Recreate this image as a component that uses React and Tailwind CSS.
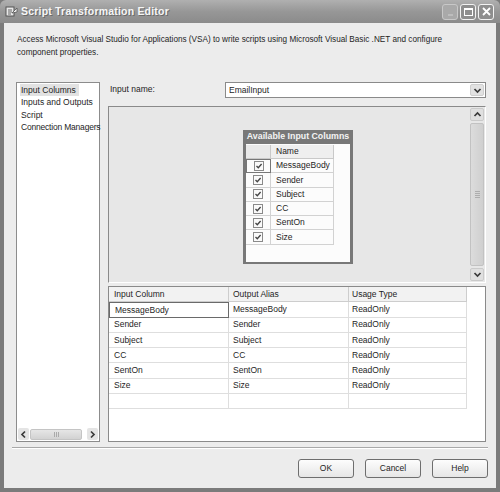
import React from 'react';

const Chevron = ({ dir = "down", color = "#3a3a3a" }) => {
  const d = {
    down: "M1.5 3 L4.5 6 L7.5 3",
    up: "M1.5 6 L4.5 3 L7.5 6",
    left: "M6 1.5 L3 4.5 L6 7.5",
    right: "M3 1.5 L6 4.5 L3 7.5",
  }[dir];
  return (
    <svg width="9" height="9" viewBox="0 0 9 9">
      <path d={d} fill="none" stroke={color} strokeWidth="1.7" />
    </svg>
  );
};

const Check = () => (
  <div className="w-[10px] h-[10px] border border-[#8a8a8a] bg-[#fafafa] flex items-center justify-center">
    <svg width="8" height="8" viewBox="0 0 8 8">
      <path d="M1.5 4 L3.3 5.8 L6.6 2" fill="none" stroke="#444" strokeWidth="1.3" />
    </svg>
  </div>
);

const available = ["MessageBody", "Sender", "Subject", "CC", "SentOn", "Size"];

export default function App() {
  return (
    <div className="w-[500px] h-[492px] flex flex-col bg-[#7b7b7b] font-['Liberation_Sans',Arial,sans-serif] text-[#1e1e1e] overflow-hidden">
      {/* Title bar */}
      <div className="h-[23px] shrink-0 flex items-center pl-[5px] pr-[6px] rounded-t-[6px] bg-gradient-to-b from-[#b0b0b0] via-[#979797] to-[#8b8b8b]">
        <svg width="13" height="12" viewBox="0 0 13 12" className="mr-[3px]">
          <rect x="1" y="1" width="8" height="9" fill="#e8e8e8" stroke="#555" strokeWidth="1" />
          <path d="M3 4 H7 M3 6 H7 M3 8 H6" stroke="#666" strokeWidth="1" />
          <path d="M7 7 L12 2 L12 6 Z" fill="#f2f2f2" stroke="#555" strokeWidth="0.8" />
        </svg>
        <span className="text-[10.5px] font-bold text-[#f6f6f6] tracking-[0.2px] [text-shadow:1px_1px_0_#6a6a6a]">
          Script Transformation Editor
        </span>
        <div className="ml-auto flex gap-[2px]">
          <div className="w-[16px] h-[16px] rounded-[3px] border border-[#c8c8c8] bg-[#a9a9a9] flex items-end justify-center pb-[3px]">
            <div className="w-[5px] h-[2px] bg-[#bdbdbd]" />
          </div>
          <div className="w-[16px] h-[16px] rounded-[3px] border border-[#f2f2f2] bg-[#8e8e8e] flex items-center justify-center">
            <div className="w-[9px] h-[8px] border border-white border-t-[2px]" />
          </div>
          <div className="w-[16px] h-[16px] rounded-[3px] border border-[#f2f2f2] bg-[#8e8e8e] flex items-center justify-center">
            <svg width="9" height="9" viewBox="0 0 9 9">
              <path d="M1 1 L8 8 M8 1 L1 8" stroke="#fff" strokeWidth="1.8" />
            </svg>
          </div>
        </div>
      </div>

      {/* Body */}
      <div className="flex-1 mx-[4px] mb-[4px] bg-[#ececec] flex flex-col">
        <p className="pl-[13px] pr-[10px] pt-[10px] text-[8.2px] leading-[13px]">
          Access Microsoft Visual Studio for Applications (VSA) to write scripts using Microsoft Visual Basic .NET and configure
          <br />
          component properties.
        </p>

        <div className="mt-[23px] h-[360px] flex pl-[12px] pr-[10px] gap-[8px] text-[8.5px]">
          {/* Left nav list */}
          <div className="w-[84px] border border-[#8c8c8c] bg-white flex flex-col pt-[1px] pb-[1px] px-[1px]">
            <div className="flex flex-col pl-[2px] leading-[12.3px]">
              <span className="self-start bg-[#e2e2e2] pl-[1px] pr-[3px]">Input Columns</span>
              <span className="pl-[1px]">Inputs and Outputs</span>
              <span className="pl-[1px]">Script</span>
              <span className="pl-[1px] whitespace-nowrap tracking-[-0.2px]">Connection Managers</span>
            </div>
            <div className="mt-auto h-[12px] flex items-center gap-[1px]">
              <div className="w-[11px] h-[12px] rounded-[2px] bg-[#e4e4e4] flex items-center justify-center">
                <Chevron dir="left" />
              </div>
              <div className="w-[52px] h-[11px] rounded-[2px] border border-[#c4c4c4] bg-gradient-to-b from-[#e6e6e6] to-[#d2d2d2] flex items-center justify-center">
                <div className="w-[5px] h-[5px] border-x border-[#aaa] flex justify-center">
                  <div className="w-px h-full bg-[#aaa]" />
                </div>
              </div>
              <div className="flex-1" />
              <div className="w-[11px] h-[12px] rounded-[2px] bg-[#e4e4e4] flex items-center justify-center">
                <Chevron dir="right" />
              </div>
            </div>
          </div>

          {/* Right side */}
          <div className="flex-1 flex flex-col">
            <div className="h-[16px] flex items-center">
              <span className="w-[117px] pl-[2px] self-start pt-[1px]">Input name:</span>
              <div className="flex-1 h-[16px] border border-[#8a8a8a] bg-white flex items-center pl-[3px] pr-[1px]">
                <span>EmailInput</span>
                <div className="ml-auto w-[14px] h-[12px] rounded-[2px] bg-[#e2e2e2] border border-[#cfcfcf] flex items-center justify-center">
                  <Chevron dir="down" />
                </div>
              </div>
            </div>

            {/* Designer surface */}
            <div className="mt-[8px] h-[177px] flex border-t border-l border-[#8a8a8a] border-r border-b border-r-white border-b-white bg-[#e7e7e7]">
              <div className="flex-1 pl-[134px] pt-[23px]">
                <div className="w-[110px] h-[134px] bg-[#787878] px-[3px] pb-[2px] flex flex-col">
                  <div className="h-[14px] flex items-center justify-center text-[8.8px] font-bold text-[#f4f4f4] whitespace-nowrap">
                    Available Input Columns
                  </div>
                  <div className="flex-1 bg-[#fcfcfc] pt-[1px]">
                    <div className="flex h-[14px]">
                      <div className="w-[25px] bg-[#e9e9e9] border-r border-b border-[#c9c9c9]" />
                      <div className="w-[63px] bg-[#efefef] border-r border-b border-[#c9c9c9] pl-[5px] flex items-center">Name</div>
                    </div>
                    {available.map((name, i) => (
                      <div key={name} className="flex h-[14.3px]">
                        <div className={`w-[25px] flex items-center justify-center border-b ${i === 0 ? "border border-[#777]" : "border-r border-[#d2d2d2]"}`}>
                          <Check />
                        </div>
                        <div className="w-[63px] border-r border-b border-[#d2d2d2] pl-[5px] flex items-center">{name}</div>
                      </div>
                    ))}
                  </div>
                </div>
              </div>
              <div className="w-[14px] mr-[1px] my-[1px] flex flex-col">
                <div className="h-[13px] rounded-[2px] bg-[#e0e0e0] border border-[#cacaca] flex items-center justify-center">
                  <Chevron dir="up" />
                </div>
                <div className="flex-1 my-[2px] rounded-[2px] bg-gradient-to-r from-[#dcdcdc] to-[#cfcfcf] border border-[#c2c2c2] flex items-center justify-center">
                  <div className="w-[5px] flex flex-col gap-[1px]">
                    <div className="h-px bg-[#adadad]" />
                    <div className="h-px bg-[#adadad]" />
                    <div className="h-px bg-[#adadad]" />
                    <div className="h-px bg-[#adadad]" />
                  </div>
                </div>
                <div className="h-[13px] rounded-[2px] bg-[#e0e0e0] border border-[#cacaca] flex items-center justify-center">
                  <Chevron dir="down" />
                </div>
              </div>
            </div>

            {/* Columns grid */}
            <div className="mt-[3px] flex-1 border border-[#8a8a8a] bg-white">
              <div className="flex h-[15.25px] bg-[#f2f2f2]">
                <div className="w-[120px] border-r border-b border-[#cdcdcd] pl-[5px] flex items-center">Input Column</div>
                <div className="w-[120px] border-r border-b border-[#cdcdcd] pl-[4px] flex items-center">Output Alias</div>
                <div className="w-[118px] border-r border-b border-[#cdcdcd] pl-[3px] flex items-center">Usage Type</div>
                <div className="flex-1 bg-white" />
              </div>
              {[...available, ""].map((name, i) => (
                <div key={i} className="flex h-[15.25px]">
                  <div className={`w-[120px] pl-[5px] flex items-center ${i === 0 ? "border border-[#6a6a6a]" : "border-r border-b border-[#dedede]"}`}>{name}</div>
                  <div className="w-[120px] border-r border-b border-[#dedede] pl-[4px] flex items-center">{name}</div>
                  <div className="w-[118px] border-r border-b border-[#dedede] pl-[3px] flex items-center">{name ? "ReadOnly" : ""}</div>
                </div>
              ))}
            </div>
          </div>
        </div>

        {/* Separator */}
        <div className="mt-[5px] mx-[8px] border-t border-[#a8a8a8] border-b border-b-white" />

        {/* Buttons */}
        <div className="mt-[10px] flex justify-end gap-[11px] pr-[8px] text-[8.5px]">
          {["OK", "Cancel", "Help"].map((label) => (
            <button
              key={label}
              className="w-[56px] h-[19px] rounded-[3px] border border-[#6e6e6e] bg-gradient-to-b from-[#fdfdfd] to-[#e6e6e6] flex items-center justify-center"
            >
              {label}
            </button>
          ))}
        </div>
      </div>
    </div>
  );
}
